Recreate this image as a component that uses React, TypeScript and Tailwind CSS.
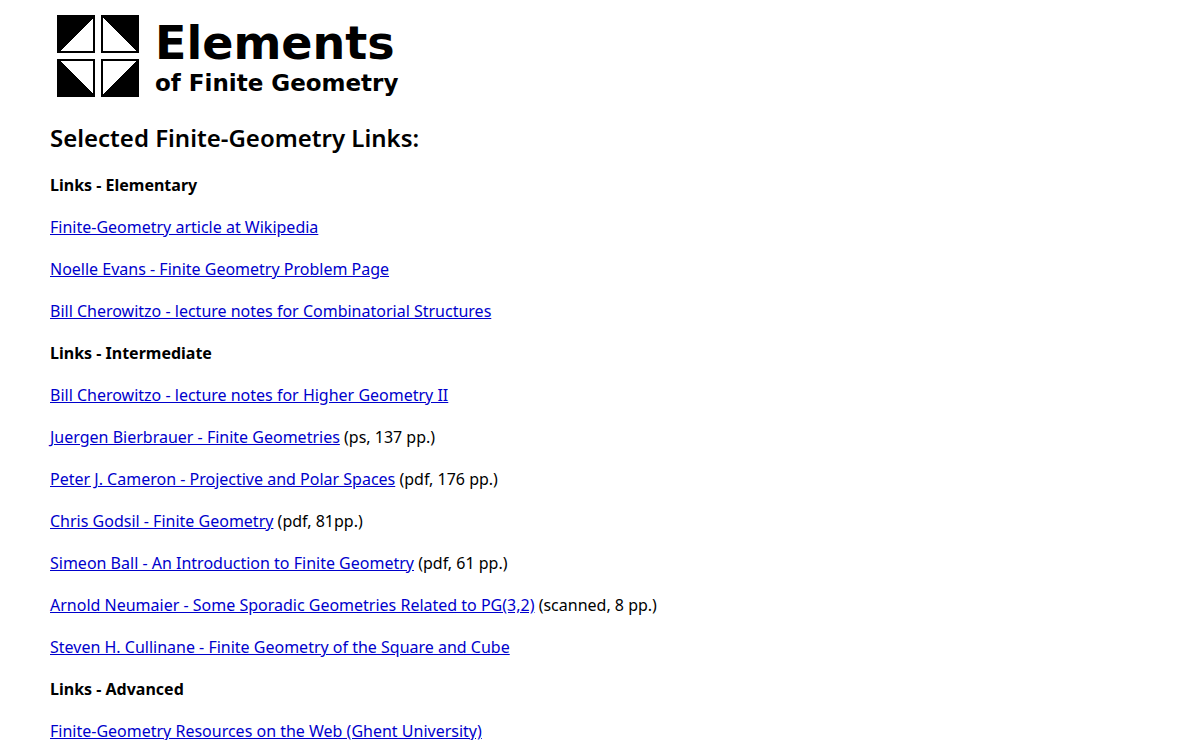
type LinkItem = {
  label: string;
  note?: string;
};

type LinkSection = {
  title: string;
  links: LinkItem[];
};

const sections: LinkSection[] = [
  {
    title: "Links - Elementary",
    links: [
      { label: "Finite-Geometry article at Wikipedia" },
      { label: "Noelle Evans - Finite Geometry Problem Page" },
      { label: "Bill Cherowitzo - lecture notes for Combinatorial Structures" },
    ],
  },
  {
    title: "Links - Intermediate",
    links: [
      { label: "Bill Cherowitzo - lecture notes for Higher Geometry II" },
      { label: "Juergen Bierbrauer - Finite Geometries", note: "(ps, 137 pp.)" },
      { label: "Peter J. Cameron - Projective and Polar Spaces", note: "(pdf, 176 pp.)" },
      { label: "Chris Godsil - Finite Geometry", note: "(pdf, 81pp.)" },
      { label: "Simeon Ball - An Introduction to Finite Geometry", note: "(pdf, 61 pp.)" },
      { label: "Arnold Neumaier - Some Sporadic Geometries Related to PG(3,2)", note: "(scanned, 8 pp.)" },
      { label: "Steven H. Cullinane - Finite Geometry of the Square and Cube" },
    ],
  },
  {
    title: "Links - Advanced",
    links: [{ label: "Finite-Geometry Resources on the Web (Ghent University)" }],
  },
];

function Logo() {
  return (
    <svg viewBox="0 0 82 82" className="size-[82px] shrink-0" shapeRendering="crispEdges" aria-hidden="true">
      <rect width="82" height="82" fill="#fff" />
      <path d="M0 0h38v38H0zM44 0h38v38H44zM0 44h38v38H0zM44 44h38v38H44z" fill="#000" />
      <path d="M36 3v33H3zM46 3v33h33zM36 79V46H3zM46 79V46h33z" fill="#fff" />
    </svg>
  );
}

export default function App() {
  return (
    <main className="min-h-screen bg-white px-[50px] font-['Noto_Sans','Open_Sans',sans-serif] text-base leading-[21px] text-black">
      <header className="flex gap-4 pt-[15px] pl-[7px] font-['DejaVu_Sans',Verdana,sans-serif] font-bold">
        <Logo />
        <div>
          <p className="text-[46px] leading-[56px]">Elements</p>
          <p className="text-[23px] leading-[24px]">of Finite Geometry</p>
        </div>
      </header>

      <h1 className="mt-[25px] text-2xl leading-8 font-semibold">Selected Finite-Geometry Links:</h1>

      {sections.map((section) => (
        <section key={section.title}>
          <h2 className="mt-[21px] font-bold">{section.title}</h2>
          {section.links.map((link) => (
            <p key={link.label} className="mt-[21px]">
              <a href="#" className="text-[#0000cc] underline">
                {link.label}
              </a>
              {link.note && ` ${link.note}`}
            </p>
          ))}
        </section>
      ))}
    </main>
  );
}
